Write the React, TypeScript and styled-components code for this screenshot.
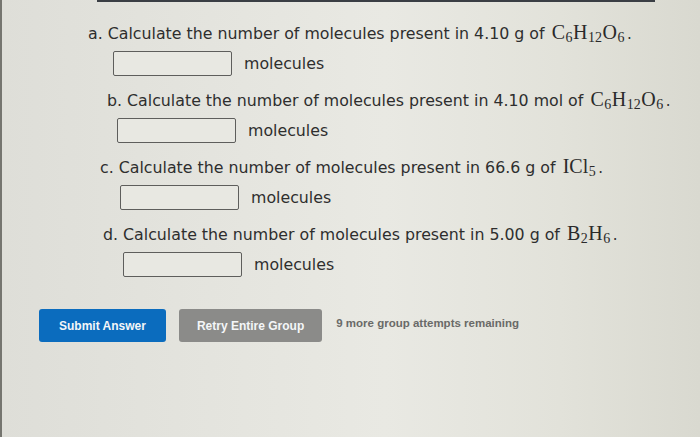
import React from 'react'
import styled, { createGlobalStyle } from 'styled-components'

const GlobalStyle = createGlobalStyle`
  html, body {
    margin: 0;
    padding: 0;
  }
  body {
    width: 700px;
    height: 437px;
    overflow: hidden;
    background: linear-gradient(90deg, #deded8 0%, #e4e4de 30%, #e9e9e3 55%, #e2e2da 80%, #d9d9d0 100%);
    font-family: 'DejaVu Sans', Verdana, sans-serif;
    color: #303030;
  }
`

type Part = {
  letter: string
  amount: string
  formula: [string, string?][]
  labelAt: number
  inputAt: number
}

const parts: Part[] = [
  { letter: 'a', amount: '4.10 g', formula: [['C', '6'], ['H', '12'], ['O', '6']], labelAt: 88, inputAt: 113 },
  { letter: 'b', amount: '4.10 mol', formula: [['C', '6'], ['H', '12'], ['O', '6']], labelAt: 107, inputAt: 117 },
  { letter: 'c', amount: '66.6 g', formula: [['ICl', '5']], labelAt: 100, inputAt: 120 },
  { letter: 'd', amount: '5.00 g', formula: [['B', '2'], ['H', '6']], labelAt: 103, inputAt: 123 },
]

export default function App() {
  return (
    <>
      <GlobalStyle />
      <Screen>
        <TopEdge />
        <Questions>
          {parts.map((p) => (
            <Block key={p.letter}>
              <QuestionLine $left={p.labelAt}>
                {p.letter}. Calculate the number of molecules present in {p.amount} of{' '}
                <Formula>
                  {p.formula.map(([el, sub], i) => (
                    <span key={i}>
                      {el}
                      {sub && <Sub>{sub}</Sub>}
                    </span>
                  ))}
                </Formula>
                <Dot>.</Dot>
              </QuestionLine>
              <AnswerRow $left={p.inputAt}>
                <AnswerBox type="text" aria-label={`answer ${p.letter}`} />
                <Unit>molecules</Unit>
              </AnswerRow>
            </Block>
          ))}
        </Questions>
        <Actions>
          <Button $bg="#0b6cbe" $pad={20}>Submit Answer</Button>
          <Button $bg="#8b8b89" $pad={18}>Retry Entire Group</Button>
          <Attempts>9 more group attempts remaining</Attempts>
        </Actions>
      </Screen>
    </>
  )
}

const Screen = styled.div`
  position: relative;
  width: 700px;
  height: 437px;
  border-left: 2px solid #75756f;
  box-sizing: border-box;
`

const TopEdge = styled.div`
  height: 2px;
  margin: 0 45px 0 95px;
  background: #3a3e44;
`

const Questions = styled.div`
  display: flex;
  flex-direction: column;
  gap: 11px;
  padding-top: 18px;
`

const Block = styled.div`
  display: flex;
  flex-direction: column;
  gap: 7px;
`

const QuestionLine = styled.div<{ $left: number }>`
  height: 24px;
  line-height: 24px;
  padding-left: ${(p) => p.$left - 2}px;
  font-size: 15.8px;
  white-space: nowrap;
  color: #2e2e2e;
`

const Formula = styled.span`
  margin-left: 2px;
  font-family: 'Liberation Serif', 'Times New Roman', serif;
  font-size: 20px;
  color: #2a2a2a;
`

const Sub = styled.sub`
  margin: 0 0.5px 0 0.5px;
  font-size: 14px;
  vertical-align: -3px;
  line-height: 0;
`

const Dot = styled.span`
  font-size: 15px;
  margin-left: 2px;
`

const AnswerRow = styled.div<{ $left: number }>`
  display: flex;
  align-items: center;
  gap: 12px;
  padding-left: ${(p) => p.$left - 2}px;
`

const AnswerBox = styled.input`
  width: 119px;
  height: 25px;
  box-sizing: border-box;
  margin: 0;
  border: 1.5px solid #5e5e5c;
  border-radius: 2px;
  background: #e8e8e2;
  outline: none;
`

const Unit = styled.span`
  font-size: 15.8px;
  color: #2e2e2e;
`

const Actions = styled.div`
  display: flex;
  align-items: center;
  gap: 13px;
  margin-top: 32px;
  padding-left: 37px;
`

const Button = styled.button<{ $bg: string; $pad: number }>`
  height: 33px;
  padding: 0 ${(p) => p.$pad}px;
  border: none;
  border-radius: 3px;
  background: ${(p) => p.$bg};
  color: #f4f6f8;
  font-family: 'Liberation Sans', Arial, sans-serif;
  font-weight: bold;
  font-size: 12px;
`

const Attempts = styled.span`
  margin-left: 1px;
  margin-top: -5px;
  font-family: 'Liberation Sans', Arial, sans-serif;
  font-weight: bold;
  font-size: 11.5px;
  color: #6a6a68;
`
